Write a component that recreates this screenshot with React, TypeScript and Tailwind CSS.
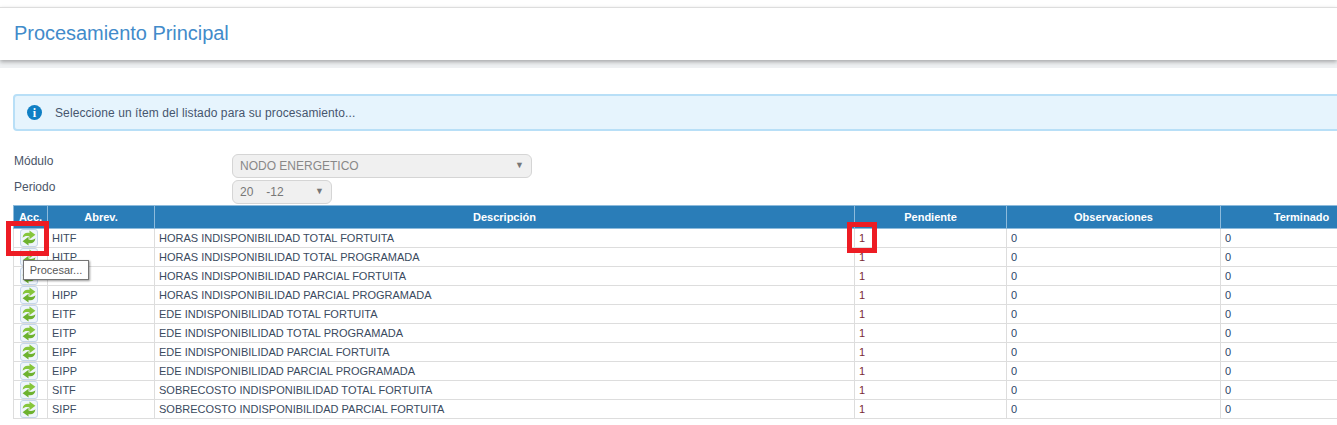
const rows = [
  ["HITF", "HORAS INDISPONIBILIDAD TOTAL FORTUITA"],
  ["HITP", "HORAS INDISPONIBILIDAD TOTAL PROGRAMADA"],
  ["HIPF", "HORAS INDISPONIBILIDAD PARCIAL FORTUITA"],
  ["HIPP", "HORAS INDISPONIBILIDAD PARCIAL PROGRAMADA"],
  ["EITF", "EDE INDISPONIBILIDAD TOTAL FORTUITA"],
  ["EITP", "EDE INDISPONIBILIDAD TOTAL PROGRAMADA"],
  ["EIPF", "EDE INDISPONIBILIDAD PARCIAL FORTUITA"],
  ["EIPP", "EDE INDISPONIBILIDAD PARCIAL PROGRAMADA"],
  ["SITF", "SOBRECOSTO INDISPONIBILIDAD TOTAL FORTUITA"],
  ["SIPF", "SOBRECOSTO INDISPONIBILIDAD PARCIAL FORTUITA"],
]

const headers = ["Acc.", "Abrev.", "Descripción", "Pendiente", "Observaciones", "Terminado"]

function ProcessIcon() {
  return (
    <svg width="16" height="16" viewBox="0 0 14 14" aria-hidden="true">
      <path d="M1.4 6.8C1.7 3.2 4.3 1.9 7.4 2.6V.4l5.2 3.8-5.2 3.8V5.6C5 5.1 3 5.3 1.4 6.8z" fill="#86c63c" />
      <path d="M12.6 7.2c-.3 3.6-2.9 4.9-6 4.2v2.2L1.4 9.8l5.2-3.8v2.4c2.4.5 4.4.3 6-1.2z" fill="#6db22f" />
    </svg>
  )
}

export default function App() {
  return (
    <main className="relative h-[425px] w-[1337px] overflow-hidden bg-white font-['Liberation_Sans',Arial,sans-serif] text-[11px] text-[#3a4a5e]">
      <div className="h-[7px]" />
      <header className="relative z-10 flex h-[53px] items-center border-t border-[#dddddd] bg-white pb-[2px] pl-[14px] shadow-[0_2px_4px_rgba(0,0,0,0.3)]">
        <h1 className="text-[20px] tracking-[-0.04px] text-[#428bca]">Procesamiento Principal</h1>
      </header>
      <div className="h-2 bg-[#eef0f2]" />

      <div className="ml-[13px] mt-[26px] flex h-[37px] w-[1340px] items-center rounded-[4px] border-2 border-[#b8dff7] bg-[#e6f4fd] pl-[12px] text-[12px] tracking-[0.1px] text-[#46566e]">
        <span className="flex h-[15px] w-[15px] items-center justify-center rounded-full bg-[#0f7fc4] font-['Liberation_Serif',serif] text-[12px] font-bold text-white">i</span>
        <span className="ml-[13px]">Seleccione un ítem del listado para su procesamiento...</span>
      </div>

      <div className="ml-[14px] mt-[23px] flex h-[24px] text-[12px] text-[#4a5568]">
        <label className="-mt-[2px] w-[218px]">Módulo</label>
        <div className="flex h-[24px] w-[300px] items-center justify-between rounded-[6px] border border-[#d5d5d5] bg-[#f0f0f0] px-[7px] text-[#888888]">
          <span>NODO ENERGETICO</span>
          <span className="text-[9px] text-[#777777]">▼</span>
        </div>
      </div>
      <div className="ml-[14px] mt-[2px] flex h-[24px] text-[12px] text-[#4a5568]">
        <label className="-mt-[2px] w-[218px]">Periodo</label>
        <div className="flex h-[24px] w-[100px] items-center justify-between rounded-[6px] border border-[#d5d5d5] bg-[#f0f0f0] px-[7px] text-[#777777]">
          <span>20<span className="ml-[13px]">-12</span></span>
          <span className="text-[9px] text-[#777777]">▼</span>
        </div>
      </div>

      <table className="ml-[13px] mt-[1px] w-[1369px] max-w-none table-fixed border-collapse">
        <colgroup>
          <col className="w-[34px]" />
          <col className="w-[107px]" />
          <col className="w-[700px]" />
          <col className="w-[152px]" />
          <col className="w-[214px]" />
          <col className="w-[162px]" />
        </colgroup>
        <thead>
          <tr className="h-[23px] bg-[#2a7db8] text-white">
            {headers.map((label) => (
              <th key={label} className="border border-[#8dbbdc] p-0 text-center text-[11px] font-bold">{label}</th>
            ))}
          </tr>
        </thead>
        <tbody>
          {rows.map(([abbrev, description]) => (
            <tr key={abbrev} className="h-[19px]">
              <td className="border border-[#dddddd] p-0">
                <div className="ml-[6px] flex h-[18px] w-[18px] items-center justify-center rounded-[3px] border border-[#c5d6ea] bg-[#eff5fb]">
                  <ProcessIcon />
                </div>
              </td>
              <td className="border border-[#dddddd] py-0 pl-[4px]">{abbrev}</td>
              <td className="border border-[#dddddd] py-0 pl-[4px]">{description}</td>
              <td className="border border-[#dddddd] py-0 pl-[4px] text-[#7a2a35]">1</td>
              <td className="border border-[#dddddd] py-0 pl-[4px] text-[#2c4468]">0</td>
              <td className="border border-[#dddddd] py-0 pl-[4px] text-[#2c4468]">0</td>
            </tr>
          ))}
        </tbody>
      </table>

      <div className="absolute left-[23px] top-[260px] flex h-[20px] w-[66px] items-center justify-center border border-[#767676] bg-white text-[11px] text-[#575757] shadow-[1px_1px_2px_rgba(0,0,0,0.4)]">
        Procesar...
      </div>
      <div className="absolute left-[6px] top-[221px] h-[35px] w-[43px] border-[5px] border-[#ed1c24]" />
      <div className="absolute left-[847px] top-[222px] h-[31px] w-[30px] border-[5px] border-[#ed1c24]" />
    </main>
  )
}
